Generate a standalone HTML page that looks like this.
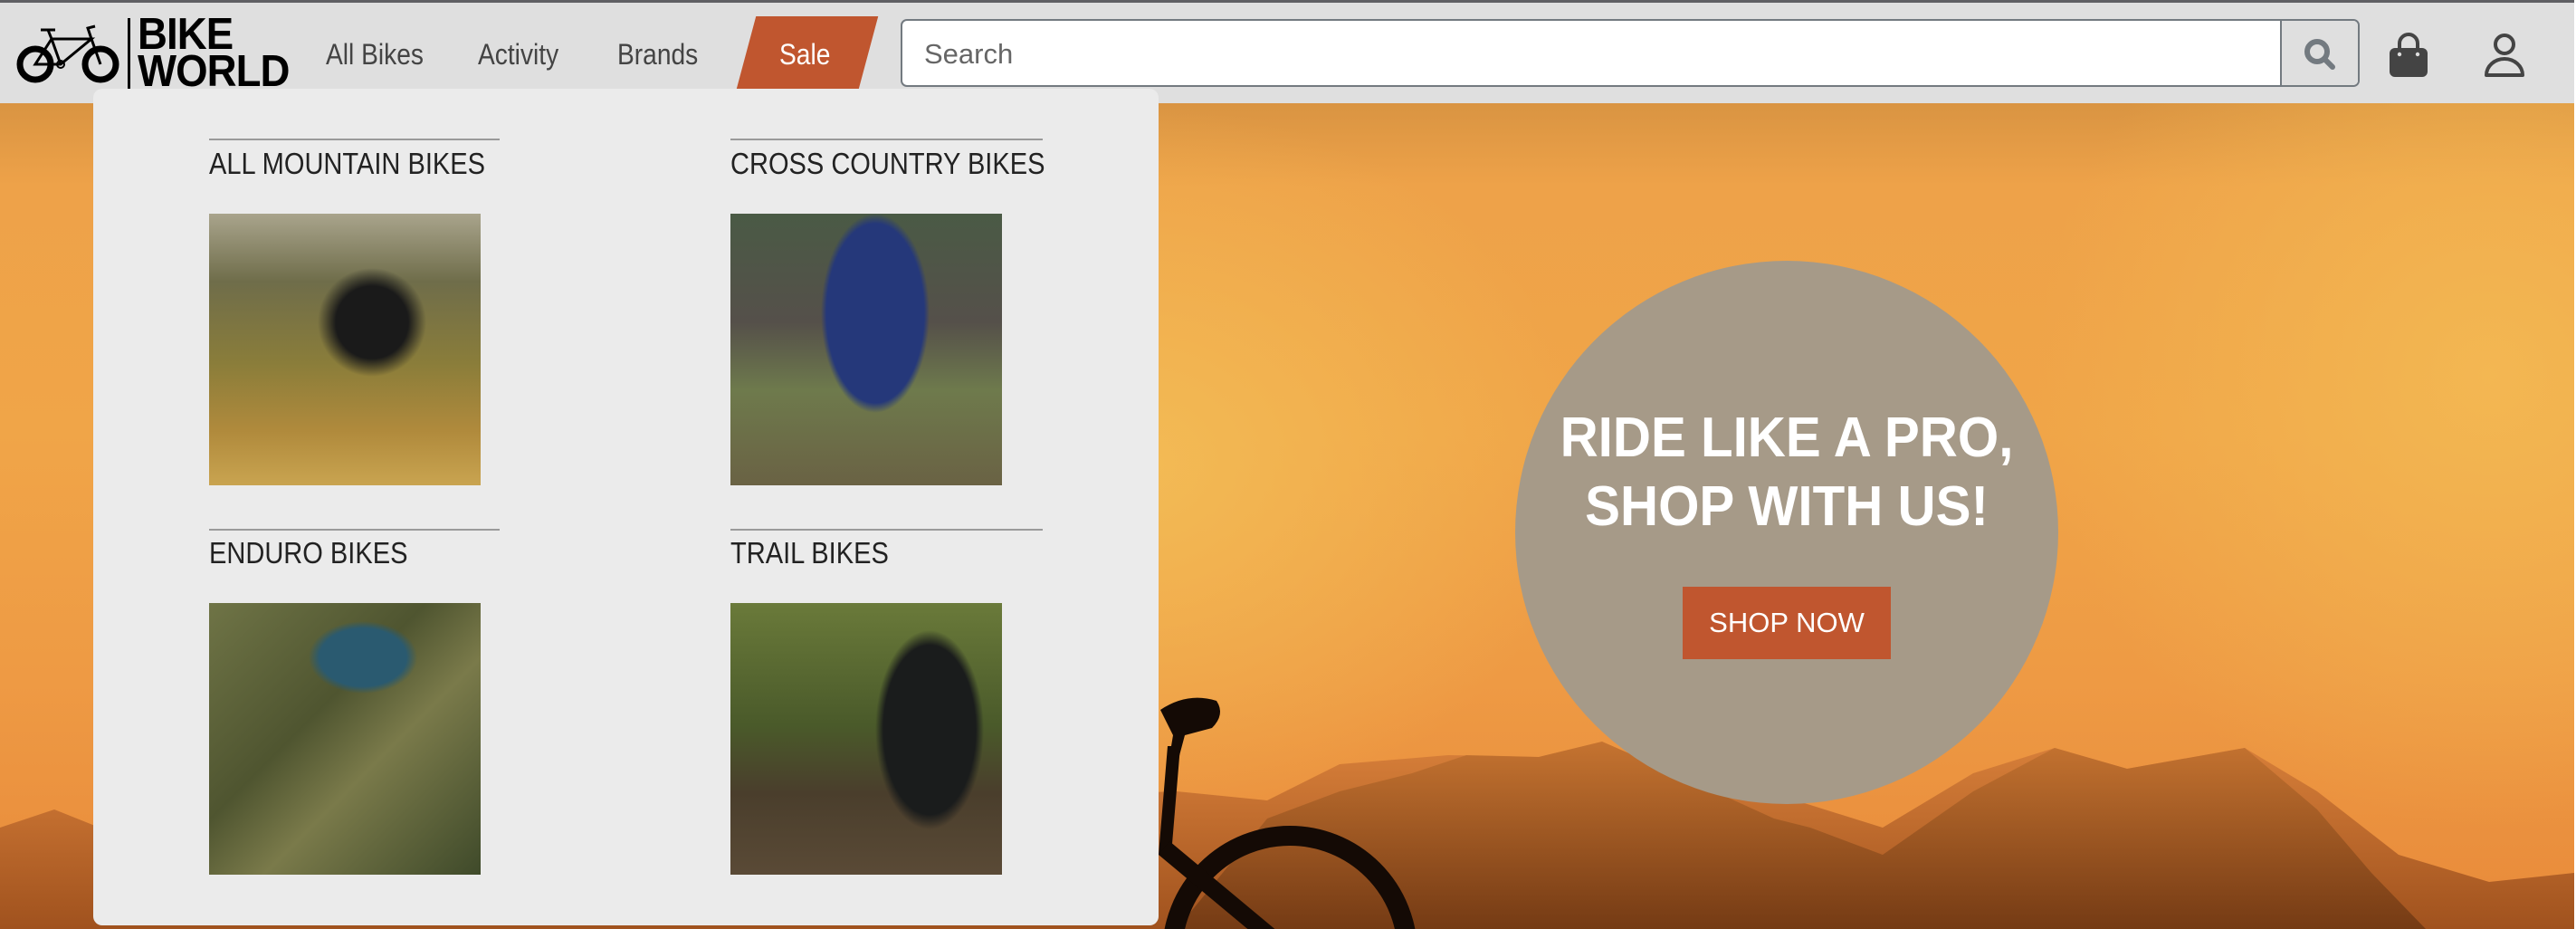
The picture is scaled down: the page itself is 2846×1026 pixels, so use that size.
<!DOCTYPE html>
<html><head><meta charset="utf-8">
<style>
*{margin:0;padding:0;box-sizing:border-box}
html,body{width:2846px;height:1026px;overflow:hidden;background:#fff;font-family:"Liberation Sans",sans-serif}
.hero{position:absolute;left:0;top:114px;width:2844px;height:912px;overflow:hidden;
background:radial-gradient(ellipse 500px 400px at 1250px 400px,#f3bb55 0%,rgba(243,187,85,0) 100%),
radial-gradient(ellipse 500px 500px at 2750px 300px,#f3b752 0%,rgba(243,183,82,0) 100%),
linear-gradient(180deg,#d99442 0%,#eea249 10%,#f0a548 40%,#ee9a44 70%,#e88a3a 100%);}
header{position:absolute;left:0;top:0;width:2844px;height:114px;background:#dfdfdf;border-top:3px solid #5f5f63}
.nav{position:absolute;top:39px;font-size:32px;color:#444;transform:scaleX(0.88);transform-origin:left}
.sale{position:absolute;left:824px;top:15px;width:135px;height:84px;background:#c0562f;transform:skewX(-15deg)}
.saletxt{position:absolute;left:861px;top:39px;font-size:32px;color:#fff;transform:scaleX(0.88);transform-origin:left}
.search{position:absolute;left:995px;top:18px;width:1612px;height:75px;border:2px solid #737a80;border-radius:7px;background:#fff;overflow:hidden}
.search span{position:absolute;left:24px;top:19px;font-size:31px;color:#666}
.search .btn{position:absolute;right:0;top:0;width:86px;height:100%;background:#dfdfdf;border-left:2px solid #737a80}
.dd{position:absolute;left:103px;top:98px;width:1177px;height:924px;background:#ebebeb;border-radius:10px}
.cat{position:absolute;font-size:33px;color:#222;transform:scaleX(0.88);transform-origin:left}
.line{position:absolute;height:2px;background:#9a9a9a}
.ph{position:absolute;width:300px;height:300px}
.circle{position:absolute;left:1674px;top:288px;width:600px;height:600px;border-radius:50%;background:#a69a88}
.h1{position:absolute;left:1674px;width:600px;text-align:center;color:#fff;font-size:62px;font-weight:bold;transform:scaleX(0.94)}
.shop{position:absolute;left:1859px;top:648px;width:230px;height:80px;background:#c0562f;color:#fff;font-size:31px;text-align:center;line-height:80px}
</style></head><body>
<div class="hero">
<svg width="2844" height="912" style="position:absolute;left:0;top:0">
<defs><linearGradient id="m" x1="0" y1="0" x2="0" y2="1"><stop offset="0" stop-color="#c0702e"/><stop offset="1" stop-color="#6a3512"/></linearGradient>
<linearGradient id="m2" x1="0" y1="0" x2="0" y2="1"><stop offset="0" stop-color="#d8803a"/><stop offset="1" stop-color="#a0521e"/></linearGradient></defs>
<path d="M0 800 L60 780 L110 800 L1300 760 L1400 770 L1480 730 L1600 720 L1700 722 L1770 705 L1850 740 L1950 760 L2000 775 L2080 800 L2180 740 L2270 712 L2350 735 L2480 712 L2560 760 L2650 830 L2750 860 L2844 850 L2844 912 L0 912Z" fill="url(#m2)"/>
<path d="M1300 912 L1400 790 L1480 760 L1560 740 L1620 720 L1700 722 L1770 705 L1850 740 L1960 790 L2000 800 L2080 830 L2180 760 L2270 712 L2350 735 L2480 712 L2560 780 L2620 850 L2680 912Z" fill="url(#m)" opacity="0.8"/>
<g fill="#140a05"><path d="M1282 670 q30 -20 62 -10 q10 15 -5 30 l-30 8 l-8 30 l-10 0 l5 -30 z"/>
<path d="M1290 710 l14 0 l-10 120 l-14 0z"/></g>
<circle cx="1425" cy="939" r="130" fill="none" stroke="#140a05" stroke-width="22"/>
<path d="M1280 830 L1400 930 L1412 915 L1292 815Z" fill="#140a05"/>
</svg>
</div>
<header>
<svg width="116" height="68" viewBox="0 0 116 68" style="position:absolute;left:17px;top:24px">
<g fill="none" stroke="#000"><circle cx="22" cy="44" r="17" stroke-width="7"/><circle cx="94" cy="44" r="17" stroke-width="7"/>
<path d="M22 44 L50 44 L84 16 L40 16 Z M40 16 L36 6 M28 6 L44 6 M84 16 L80 4 L88 2 M84 16 L94 44 M50 44 L40 16" stroke-width="3"/></g>
<circle cx="50" cy="44" r="4" fill="none" stroke="#000" stroke-width="2"/></svg>
<div style="position:absolute;left:141px;top:17px;width:3px;height:80px;background:#000"></div>
<div style="position:absolute;left:152px;top:15px;font-weight:bold;font-size:49px;line-height:41px;color:#000;letter-spacing:-1px;transform:scaleX(0.93);transform-origin:left">BIKE<br>WORLD</div>
<div class="nav" style="left:360px">All Bikes</div>
<div class="nav" style="left:528px">Activity</div>
<div class="nav" style="left:682px">Brands</div>
<div class="sale"></div><div class="saletxt">Sale</div>
<div class="search"><span>Search</span><div class="btn">
<svg width="40" height="40" viewBox="0 0 40 40" style="position:absolute;left:22px;top:17px"><circle cx="17" cy="17" r="11" fill="none" stroke="#737a80" stroke-width="6"/><path d="M25 25 L34 34" stroke="#737a80" stroke-width="6" stroke-linecap="round"/></svg></div></div>
<svg width="46" height="50" viewBox="0 0 46 50" style="position:absolute;left:2638px;top:33px"><path d="M13 18 V12 a10 10 0 0 1 20 0 V18" fill="none" stroke="#444" stroke-width="4"/><rect x="2" y="17" width="42" height="32" rx="6" fill="#444"/><circle cx="13" cy="24" r="2.2" fill="#ddd"/><circle cx="33" cy="24" r="2.2" fill="#ddd"/></svg>
<svg width="46" height="50" viewBox="0 0 46 50" style="position:absolute;left:2744px;top:33px"><circle cx="23" cy="13" r="10" fill="none" stroke="#444" stroke-width="4"/><path d="M3 47 a20 18 0 0 1 40 0 Z" fill="none" stroke="#444" stroke-width="4" stroke-linejoin="round"/></svg>
</header>
<div class="circle"></div>
<div class="h1" style="top:448px">RIDE LIKE A PRO,</div>
<div class="h1" style="top:524px">SHOP WITH US!</div>
<div class="shop">SHOP NOW</div>
<div class="dd"></div>
<div class="line" style="left:231px;top:153px;width:321px"></div>
<div class="line" style="left:807px;top:153px;width:345px"></div>
<div class="cat" style="left:231px;top:162px">ALL MOUNTAIN BIKES</div>
<div class="cat" style="left:807px;top:162px">CROSS COUNTRY BIKES</div>
<div class="ph" style="left:231px;top:236px;background:radial-gradient(circle at 180px 120px,#1a1a1a 0 40px,transparent 60px),linear-gradient(180deg,#a9a48c 0%,#6f6d4a 25%,#8a7d3a 55%,#b08a3c 80%,#c9a450 100%)"></div>
<div class="ph" style="left:807px;top:236px;background:radial-gradient(ellipse 60px 110px at 160px 110px,#25387a 0 90%,transparent 100%),linear-gradient(180deg,#4a5a45 0%,#55504a 40%,#6e7a4c 65%,#6a6244 100%)"></div>
<div class="line" style="left:231px;top:584px;width:321px"></div>
<div class="line" style="left:807px;top:584px;width:345px"></div>
<div class="cat" style="left:231px;top:592px">ENDURO BIKES</div>
<div class="cat" style="left:807px;top:592px">TRAIL BIKES</div>
<div class="ph" style="left:231px;top:666px;background:radial-gradient(ellipse 60px 40px at 170px 60px,#2a5a70 0 80%,transparent 100%),linear-gradient(135deg,#6f7446 0%,#4f5530 40%,#7a7a4a 60%,#3f4a2a 100%)"></div>
<div class="ph" style="left:807px;top:666px;background:radial-gradient(ellipse 60px 110px at 220px 140px,#1a1c1c 0 85%,transparent 100%),linear-gradient(180deg,#6a7a3a 0%,#4a5a2a 45%,#4a3e2c 70%,#5a4a36 100%)"></div>
</body></html>
